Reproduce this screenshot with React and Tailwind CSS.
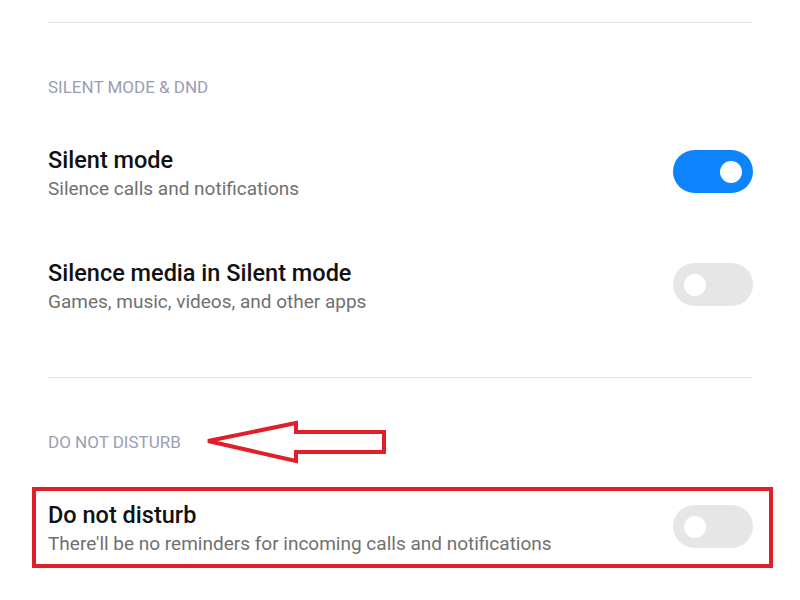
export default function App() {
  const font = { fontFamily: "Roboto, 'Noto Sans', sans-serif" };
  const Toggle = ({ on }) => (
    <div
      className={`relative mr-[-1px] mt-[4px] h-[43px] w-[80px] shrink-0 rounded-full ${on ? "bg-[#0e84fc]" : "bg-[#e6e6e6]"}`}
    >
      <div
        className={`absolute top-[11px] h-[22px] w-[22px] rounded-full bg-white ${on ? "right-[11px]" : "left-[11px]"}`}
      />
    </div>
  );
  const Row = ({ title, sub, on, className = "" }) => (
    <div className={`flex items-start justify-between ${className}`}>
      <div className="flex flex-col">
        <div className="text-[23.5px] leading-[28px] font-medium text-[#111]">{title}</div>
        <div className="mt-[2px] text-[19px] leading-[26px] text-[#707070]">{sub}</div>
      </div>
      <Toggle on={on} />
    </div>
  );
  return (
    <div className="relative h-[600px] w-[800px] overflow-hidden bg-white" style={font}>
      <div className="flex flex-col px-[48px] pt-[22px]">
        <div className="h-[1px] bg-[#e4e4e6]" />
        <div className="mt-[54px] text-[17px] leading-[20px] text-[#9a9db4]">SILENT MODE &amp; DND</div>
        <Row className="mt-[49px]" title="Silent mode" sub="Silence calls and notifications" on />
        <Row className="mt-[57px]" title="Silence media in Silent mode" sub="Games, music, videos, and other apps" />
        <div className="mt-[62px] h-[1px] bg-[#e4e4e6]" />
        <div className="mt-[54px] text-[17px] leading-[20px] text-[#9a9db4]">DO NOT DISTURB</div>
        <Row className="mt-[49px]" title="Do not disturb" sub="There'll be no reminders for incoming calls and notifications" />
      </div>
      <div className="pointer-events-none absolute left-[32px] top-[487px] h-[81px] w-[741px] border-[4px] border-[#e01f2b]" />
      <svg className="pointer-events-none absolute left-0 top-0" width="800" height="600">
        <polygon
          points="208,441 296,423 296,432 384,432 384,452 296,452 296,461"
          fill="none"
          stroke="#e01f2b"
          strokeWidth="4"
          strokeLinejoin="miter"
        />
      </svg>
    </div>
  );
}
